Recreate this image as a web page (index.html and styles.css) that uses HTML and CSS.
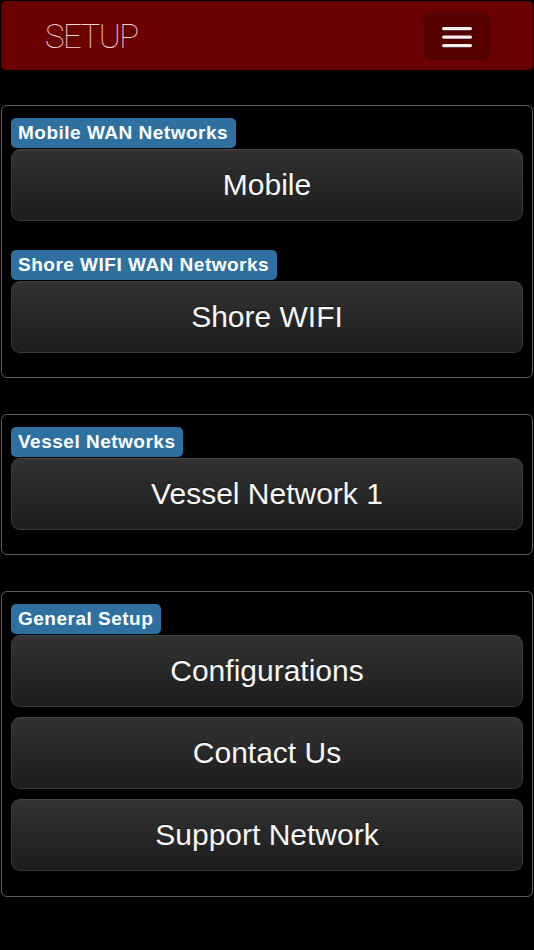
FILE: index.html
```html
<!DOCTYPE html>
<html lang="en">
<head>
<meta charset="utf-8">
<title>Setup</title>
<link rel="stylesheet" href="styles.css">
</head>
<body>
<header class="topbar">
  <h1 class="title">SETUP</h1>
  <button class="menu-btn" aria-label="Menu">
    <svg width="30" height="22" viewBox="0 0 30 22">
      <rect x="0" y="1" width="30" height="3.2" rx="1.6" fill="#f4eeee"/>
      <rect x="0" y="9.5" width="30" height="3.2" rx="1.6" fill="#f4eeee"/>
      <rect x="0" y="18" width="30" height="3.2" rx="1.6" fill="#f4eeee"/>
    </svg>
  </button>
</header>
<main class="content">
  <section class="panel">
    <div class="group">
      <div class="legend">Mobile WAN Networks</div>
      <a class="btn">Mobile</a>
    </div>
    <div class="group">
      <div class="legend">Shore WIFI WAN Networks</div>
      <a class="btn">Shore WIFI</a>
    </div>
  </section>
  <section class="panel">
    <div class="group">
      <div class="legend">Vessel Networks</div>
      <a class="btn">Vessel Network 1</a>
    </div>
  </section>
  <section class="panel panel-last">
    <div class="group">
      <div class="legend">General Setup</div>
      <div class="btn-list">
        <a class="btn">Configurations</a>
        <a class="btn">Contact Us</a>
        <a class="btn">Support Network</a>
      </div>
    </div>
  </section>
</main>
</body>
</html>
```
FILE: styles.css
```css
html, body {
  margin: 0;
  padding: 0;
  background: #000;
}
body {
  font-family: "Liberation Sans", Arial, sans-serif;
  color: #fff;
  padding-top: 1px;
}
.topbar {
  margin: 0 1px;
  height: 69px;
  background: #6b0000;
  border-radius: 5px;
  display: flex;
  align-items: center;
  justify-content: space-between;
  padding: 0 43px 0 44px;
  box-sizing: border-box;
}
.title {
  margin: 2px 0 0 0;
  font-family: Roboto, "Liberation Sans", sans-serif;
  font-weight: 100;
  font-size: 33px;
  letter-spacing: -1.5px;
  color: #f3d6d6;
  line-height: 1;
}
.menu-btn {
  width: 66px;
  height: 47px;
  margin-top: 2px;
  background: #560000;
  border: 1px solid #4a0000;
  border-radius: 6px;
  display: flex;
  align-items: center;
  justify-content: center;
  padding: 0;
  box-shadow: inset 0 1px 0 rgba(255,255,255,0.03);
}
.menu-btn svg {
  display: block;
  filter: drop-shadow(0 1px 0 rgba(0,0,0,0.35));
}
.content {
  padding: 35px 1px 0 1px;
}
.panel {
  border: 1px solid #5e5e5e;
  border-radius: 6px;
  padding: 12px 9px 24px 9px;
  margin-bottom: 36px;
}
.panel-last {
  padding-bottom: 25px;
}
.group + .group {
  margin-top: 29px;
}
.legend {
  display: inline-block;
  height: 30px;
  line-height: 30px;
  padding: 0 8px 0 7px;
  background: #2e71a0;
  border-radius: 5px;
  font-weight: bold;
  font-size: 19px;
  letter-spacing: 0.5px;
  color: #fff;
  vertical-align: top;
}
.btn {
  display: flex;
  align-items: center;
  justify-content: center;
  height: 70px;
  margin-top: 1px;
  background: linear-gradient(#323232, #1d1d1d);
  border: 1px solid #3a3a3a;
  border-top-color: #474747;
  border-radius: 9px;
  font-size: 30px;
  color: #f7f7f7;
  text-shadow: 0 -1px 0 rgba(0,0,0,0.4);
  cursor: pointer;
}
.btn-list {
  display: flex;
  flex-direction: column;
  gap: 10px;
}
.btn-list .btn {
  margin-top: 0;
}
.btn-list .btn:first-child {
  margin-top: 1px;
}
```
